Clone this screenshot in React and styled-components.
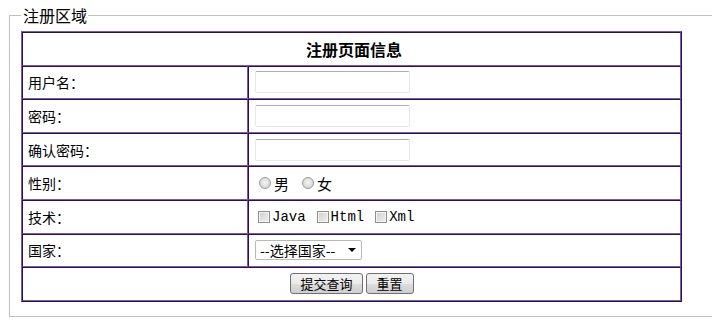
import * as React from "react";
import styled, { createGlobalStyle } from "styled-components";

const GlobalStyle = createGlobalStyle`
  html, body {
    margin: 0;
    padding: 0;
    background: #fff;
    overflow: hidden;
  }
  body {
    font-family: "Noto Sans CJK SC", "DejaVu Sans", sans-serif;
    font-size: 14px;
    color: #000;
  }
`;

const DARK = "#2c0f52";
const LIGHT = "#7a5ea6";

const Page = styled.div`
  padding: 7px 0 0 9px;
  width: 740px;
`;

const Fieldset = styled.fieldset`
  margin: 0;
  padding: 8px 0 13px 11px;
  height: 310px;
  box-sizing: border-box;
  border: 1px solid #c0c0c0;
  border-right: none;
`;

const Legend = styled.legend`
  padding: 0 1px 0 2px;
  margin-left: 0;
  font-size: 16px;
  line-height: 16px;
`;

const Table = styled.table`
  width: 661px;
  border-collapse: separate;
  border-spacing: 0;
  border: 1px solid;
  border-color: ${LIGHT} ${DARK} ${DARK} ${LIGHT};
`;

const Cell = styled.td`
  height: 31.6px;
  padding: 0 0 0 5px;
  border: 1px solid;
  border-color: ${DARK} ${LIGHT} ${LIGHT} ${DARK};
  vertical-align: middle;
  width: ${(p) => (p.$label ? "219px" : "auto")};
  text-align: ${(p) => (p.$center ? "center" : "left")};
  white-space: nowrap;
`;

const Title = styled.span`
  font-weight: bold;
  font-size: 16px;
`;

const TextBox = styled.input`
  width: 155px;
  height: 22px;
  box-sizing: border-box;
  border: 1px solid #e3e9ef;
  border-top-color: #abadb3;
  border-radius: 2px;
  margin: 0 0 0 1px;
  outline: none;
  display: block;
`;

const Options = styled.div`
  display: flex;
  align-items: center;
  gap: ${(p) => p.$gap}px;
  padding-left: ${(p) => p.$pad}px;
`;

const Choice = styled.label`
  display: flex;
  align-items: center;
  gap: ${(p) => (p.$mono ? "2px" : "3px")};
  font-family: ${(p) =>
    p.$mono ? `"Liberation Mono", "DejaVu Sans Mono", monospace` : "inherit"};
  font-size: ${(p) => (p.$mono ? "14px" : "15px")};
`;

const Radio = styled.input.attrs({ type: "radio" })`
  appearance: none;
  margin: 0;
  width: 12px;
  height: 12px;
  border-radius: 50%;
  border: 1px solid #9a9a9a;
  background: radial-gradient(circle at 50% 45%, #f4f4f4 0, #d8d8d8 70%, #c8c8c8 100%);
`;

const Check = styled.input.attrs({ type: "checkbox" })`
  appearance: none;
  margin: 0;
  width: 12px;
  height: 12px;
  border: 1px solid #8f8f8f;
  box-shadow: inset 0 0 0 1px #f4f4f4;
  background: linear-gradient(135deg, #cfcfcf, #f0f0f0);
`;

const SelectBox = styled.div`
  display: inline-flex;
  align-items: center;
  justify-content: space-between;
  width: 107px;
  height: 20px;
  box-sizing: border-box;
  border: 1px solid #b8b8b8;
  border-radius: 2px;
  padding: 0 5px 0 4px;
  font-size: 14px;
  margin-left: 1px;
`;

const Arrow = styled.span`
  width: 0;
  height: 0;
  border-left: 4px solid transparent;
  border-right: 4px solid transparent;
  border-top: 4px solid #000;
`;

const Buttons = styled.div`
  display: flex;
  justify-content: center;
  gap: 3px;
  padding-right: 4px;
`;

const Button = styled.button`
  height: 21px;
  padding: 0 ${(p) => (p.$wide ? "9px" : "10px")};
  font-family: "Noto Sans CJK SC", sans-serif;
  font-size: 13px;
  line-height: 17px;
  border: 1px solid #707070;
  border-radius: 3px;
  background: linear-gradient(#f2f2f2 0%, #ebebeb 50%, #dddddd 51%, #cfcfcf 100%);
  color: #000;
`;

const fields = [
  { label: "用户名：", kind: "text" },
  { label: "密码：", kind: "password" },
  { label: "确认密码：", kind: "password" },
];

export default function App() {
  return (
    <>
      <GlobalStyle />
      <Page>
        <Fieldset>
          <Legend>注册区域</Legend>
          <Table>
            <tbody>
              <tr>
                <Cell colSpan={2} $center>
                  <Title>注册页面信息</Title>
                </Cell>
              </tr>
              {fields.map((f) => (
                <tr key={f.label}>
                  <Cell $label>{f.label}</Cell>
                  <Cell>
                    <TextBox type={f.kind} />
                  </Cell>
                </tr>
              ))}
              <tr>
                <Cell $label>性别：</Cell>
                <Cell>
                  <Options $gap={13} $pad={5}>
                    <Choice>
                      <Radio name="sex" />男
                    </Choice>
                    <Choice>
                      <Radio name="sex" />女
                    </Choice>
                  </Options>
                </Cell>
              </tr>
              <tr>
                <Cell $label>技术：</Cell>
                <Cell>
                  <Options $gap={11} $pad={4}>
                    <Choice $mono>
                      <Check />Java
                    </Choice>
                    <Choice $mono>
                      <Check />Html
                    </Choice>
                    <Choice $mono>
                      <Check />Xml
                    </Choice>
                  </Options>
                </Cell>
              </tr>
              <tr>
                <Cell $label>国家：</Cell>
                <Cell>
                  <SelectBox>
                    --选择国家--
                    <Arrow />
                  </SelectBox>
                </Cell>
              </tr>
              <tr>
                <Cell colSpan={2} $center>
                  <Buttons>
                    <Button $wide>提交查询</Button>
                    <Button>重置</Button>
                  </Buttons>
                </Cell>
              </tr>
            </tbody>
          </Table>
        </Fieldset>
      </Page>
    </>
  );
}
